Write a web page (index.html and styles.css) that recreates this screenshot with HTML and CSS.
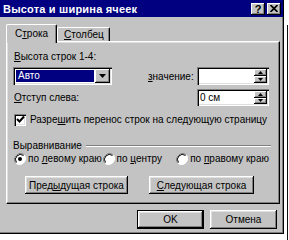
FILE: index.html
```html
<!DOCTYPE html>
<html lang="ru">

<head>
    <meta charset="UTF-8">
    <title>Высота и ширина ячеек</title>
    <link rel="stylesheet" href="styles.css">
</head>

<body>
    <div class="screen">
        <div class="dialog">
            <div class="titlebar">
                <span class="title">Высота и ширина ячеек</span>
                <div class="caption-btns">
                    <span class="cap-btn help">?</span>
                    <span class="cap-btn close">
                        <svg width="8" height="7" viewBox="0 0 8 7">
                            <path d="M0.5 0 L7.5 7 M7.5 0 L0.5 7" stroke="#000" stroke-width="1.7" fill="none"/>
                        </svg>
                    </span>
                </div>
            </div>

            <div class="tabs">
                <div class="tab active">С<u>т</u>рока</div>
                <div class="tab"><u>С</u>толбец</div>
            </div>

            <div class="panel">
                <div class="label"><u>В</u>ысота строк 1-4:</div>

                <div class="row">
                    <div class="combo">
                        <span class="combo-value">Авто</span>
                        <span class="combo-btn">
                            <svg width="7" height="4" viewBox="0 0 7 4"><path d="M0 0 H7 L3.5 4 Z" fill="#000"/></svg>
                        </span>
                    </div>
                    <span class="row-label"><u>з</u>начение:</span>
                    <div class="spin">
                        <span class="spin-text"></span>
                        <span class="spin-btns">
                            <span class="spin-btn"><svg width="5" height="3" viewBox="0 0 5 3"><path d="M2.5 0 L5 3 H0 Z" fill="#000"/></svg></span>
                            <span class="spin-btn"><svg width="5" height="3" viewBox="0 0 5 3"><path d="M0 0 H5 L2.5 3 Z" fill="#000"/></svg></span>
                        </span>
                    </div>
                </div>

                <div class="row row-indent">
                    <span><u>О</u>тступ слева:</span>
                    <div class="spin">
                        <span class="spin-text">0 см</span>
                        <span class="spin-btns">
                            <span class="spin-btn"><svg width="5" height="3" viewBox="0 0 5 3"><path d="M2.5 0 L5 3 H0 Z" fill="#000"/></svg></span>
                            <span class="spin-btn"><svg width="5" height="3" viewBox="0 0 5 3"><path d="M0 0 H5 L2.5 3 Z" fill="#000"/></svg></span>
                        </span>
                    </div>
                </div>

                <div class="check-row">
                    <span class="checkbox">
                        <svg width="9" height="9" viewBox="0 0 9 9"><path d="M1 4 L3.5 6.5 L8 1.5" stroke="#000" stroke-width="2" fill="none"/></svg>
                    </span>
                    <span>Разре<u>ш</u>ить перенос строк на следующую страницу</span>
                </div>

                <div class="group">
                    <span>Выравнивание</span>
                    <span class="group-line"></span>
                </div>

                <div class="radio-row">
                    <label class="radio r-left">
                        <svg width="12" height="12" viewBox="0 0 12 12">
                            <circle cx="6" cy="6" r="5.5" fill="#fff"/>
                            <path d="M10.2 1.8 A6 6 0 0 0 1.8 10.2" stroke="#808080" fill="none"/>
                            <path d="M9.5 2.5 A5 5 0 0 0 2.5 9.5" stroke="#000" fill="none"/>
                            <path d="M1.8 10.2 A6 6 0 0 0 10.2 1.8" stroke="#fff" fill="none"/>
                            <circle cx="6" cy="6" r="2" fill="#000"/>
                        </svg>
                        <span>по <u>л</u>евому краю</span>
                    </label>
                    <label class="radio r-center">
                        <svg width="12" height="12" viewBox="0 0 12 12">
                            <circle cx="6" cy="6" r="5.5" fill="#fff"/>
                            <path d="M10.2 1.8 A6 6 0 0 0 1.8 10.2" stroke="#808080" fill="none"/>
                            <path d="M9.5 2.5 A5 5 0 0 0 2.5 9.5" stroke="#000" fill="none"/>
                            <path d="M1.8 10.2 A6 6 0 0 0 10.2 1.8" stroke="#fff" fill="none"/>
                        </svg>
                        <span>по <u>ц</u>ентру</span>
                    </label>
                    <label class="radio">
                        <svg width="12" height="12" viewBox="0 0 12 12">
                            <circle cx="6" cy="6" r="5.5" fill="#fff"/>
                            <path d="M10.2 1.8 A6 6 0 0 0 1.8 10.2" stroke="#808080" fill="none"/>
                            <path d="M9.5 2.5 A5 5 0 0 0 2.5 9.5" stroke="#000" fill="none"/>
                            <path d="M1.8 10.2 A6 6 0 0 0 10.2 1.8" stroke="#fff" fill="none"/>
                        </svg>
                        <span>по <u>п</u>равому краю</span>
                    </label>
                </div>

                <div class="nav-btns">
                    <span class="btn btn-prev">Пред<u>ы</u>дущая строка</span>
                    <span class="btn btn-next"><u>С</u>ледующая строка</span>
                </div>
            </div>

            <div class="dialog-btns">
                <span class="btn btn-ok">OK</span>
                <span class="btn btn-cancel">Отмена</span>
            </div>
        </div>
        <div class="edge">
            <div class="edge-line"></div>
        </div>
    </div>
</body>

</html>
```

FILE: styles.css
```css
* {
    margin: 0;
    padding: 0;
    box-sizing: border-box;
}

body {
    background: #fff;
    font-family: 'Liberation Sans', Arial, sans-serif;
    font-size: 10px;
    color: #000;
    white-space: nowrap;
}

u {
    text-decoration: underline;
    text-underline-offset: 1px;
}

.screen {
    width: 289px;
    height: 240px;
    display: flex;
    background: #fff;
}

.dialog {
    width: 284px;
    height: 234px;
    background: #c3c3c3;
    border-right: 1px solid #000;
    border-bottom: 1px solid #000;
    box-shadow: inset -1px -1px #808080;
}

/* title bar */
.titlebar {
    height: 17px;
    background: #000080;
    display: flex;
    align-items: center;
    justify-content: space-between;
    padding: 0 2px 0 3px;
}

.title {
    color: #fff;
    font-weight: bold;
    font-size: 11px;
    letter-spacing: 0.2px;
}

.caption-btns {
    display: flex;
    gap: 2px;
}

.cap-btn {
    width: 14px;
    height: 12px;
    background: #c3c3c3;
    display: flex;
    align-items: center;
    justify-content: center;
    font-weight: bold;
    font-size: 11px;
    box-shadow: inset -1px -1px #000, inset 1px 1px #fff, inset -2px -2px #808080;
}

/* tabs */
.tabs {
    display: flex;
    align-items: flex-end;
    margin: 7px 0 0 6px;
    height: 17px;
}

.tab {
    height: 14px;
    padding: 0 6px 0 6px;
    line-height: 13px;
    border-top: 1px solid #fff;
    border-left: 1px solid #fff;
    border-right: 1px solid #000;
    border-radius: 2px 2px 0 0;
    box-shadow: inset -1px 0 #808080;
}

.tab.active {
    height: 19px;
    width: 51px;
    padding: 2px 0 0 8px;
    margin-bottom: -2px;
    background: #c3c3c3;
    position: relative;
    z-index: 1;
}

.tab + .tab {
    width: 53px;
    padding-left: 6px;
}

/* tab page */
.panel {
    height: 163px;
    margin: 0 3px 0 6px;
    padding: 8px 10px 0 7px;
    border: 1px solid;
    border-color: #fff #000 #000 #fff;
    box-shadow: inset -1px -1px #808080, inset 1px 1px #dfdfdf;
}

.label {
    line-height: 13px;
}

.row {
    display: flex;
    align-items: center;
    height: 18px;
    margin-top: 4px;
}

.row-indent {
    justify-content: space-between;
    height: 17px;
}

.row-label {
    margin-left: 36px;
}

.combo {
    width: 99px;
    height: 18px;
    margin-left: -1px;
    background: #fff;
    display: flex;
    padding: 2px;
    box-shadow: inset 1px 1px #808080, inset 2px 2px #000, inset -1px -1px #fff, inset -2px -2px #dfdfdf;
}

.combo-value {
    flex: 1;
    margin: 1px;
    background: #000080;
    color: #fff;
    line-height: 12px;
    padding-left: 2px;
}

.combo-btn {
    width: 15px;
    height: 14px;
    background: #c3c3c3;
    display: flex;
    align-items: center;
    justify-content: center;
    box-shadow: inset -1px -1px #000, inset 1px 1px #fff, inset -2px -2px #808080;
}

.spin {
    width: 72px;
    height: 18px;
    margin-left: auto;
    background: #fff;
    display: flex;
    padding: 2px;
    box-shadow: inset 1px 1px #808080, inset 2px 2px #000, inset -1px -1px #fff, inset -2px -2px #dfdfdf;
}

.row-indent .spin {
    height: 17px;
}

.spin-text {
    flex: 1;
    line-height: 13px;
    padding-left: 1px;
}

.spin-btns {
    width: 13px;
    display: flex;
    flex-direction: column;
}

.spin-btn {
    flex: 1;
    background: #c3c3c3;
    display: flex;
    align-items: center;
    justify-content: center;
    box-shadow: inset -1px -1px #000, inset 1px 1px #fff, inset -2px -2px #808080;
}

.check-row {
    display: flex;
    align-items: center;
    gap: 4px;
    height: 13px;
    margin-top: 7px;
}

.checkbox {
    width: 12px;
    height: 12px;
    background: #fff;
    display: flex;
    align-items: center;
    justify-content: center;
    box-shadow: inset 1px 1px #808080, inset 2px 2px #000, inset -1px -1px #fff, inset -2px -2px #dfdfdf;
}

.group {
    display: flex;
    align-items: center;
    height: 13px;
    margin-top: 13px;
    margin-left: -1px;
    margin-right: -2px;
}

.group-line {
    flex: 1;
    margin-left: 4px;
    border-top: 1px solid #808080;
    border-bottom: 1px solid #fff;
}

.radio-row {
    display: flex;
    align-items: center;
    height: 13px;
}

.radio {
    display: flex;
    align-items: center;
    gap: 2px;
}

.r-left {
    width: 89px;
}

.r-center {
    width: 74px;
}

.btn {
    height: 18px;
    display: flex;
    align-items: center;
    justify-content: center;
    background: #c3c3c3;
    box-shadow: inset -1px -1px #000, inset 1px 1px #fff, inset -2px -2px #808080, inset 2px 2px #dfdfdf;
}

.nav-btns {
    display: flex;
    margin: 11px 0 0 11px;
    gap: 21px;
}

.btn-prev {
    width: 103px;
}

.btn-next {
    width: 105px;
}

.dialog-btns {
    display: flex;
    justify-content: flex-end;
    gap: 6px;
    margin-top: 6px;
    padding-right: 6px;
}

.btn-ok,
.btn-cancel {
    width: 67px;
    height: 19px;
}

.btn-ok {
    border: 1px solid #000;
}

.edge {
    flex: 1;
    display: flex;
    padding-top: 25px;
}

.edge-line {
    margin-left: 3px;
    width: 1px;
    background: #111;
}
```
